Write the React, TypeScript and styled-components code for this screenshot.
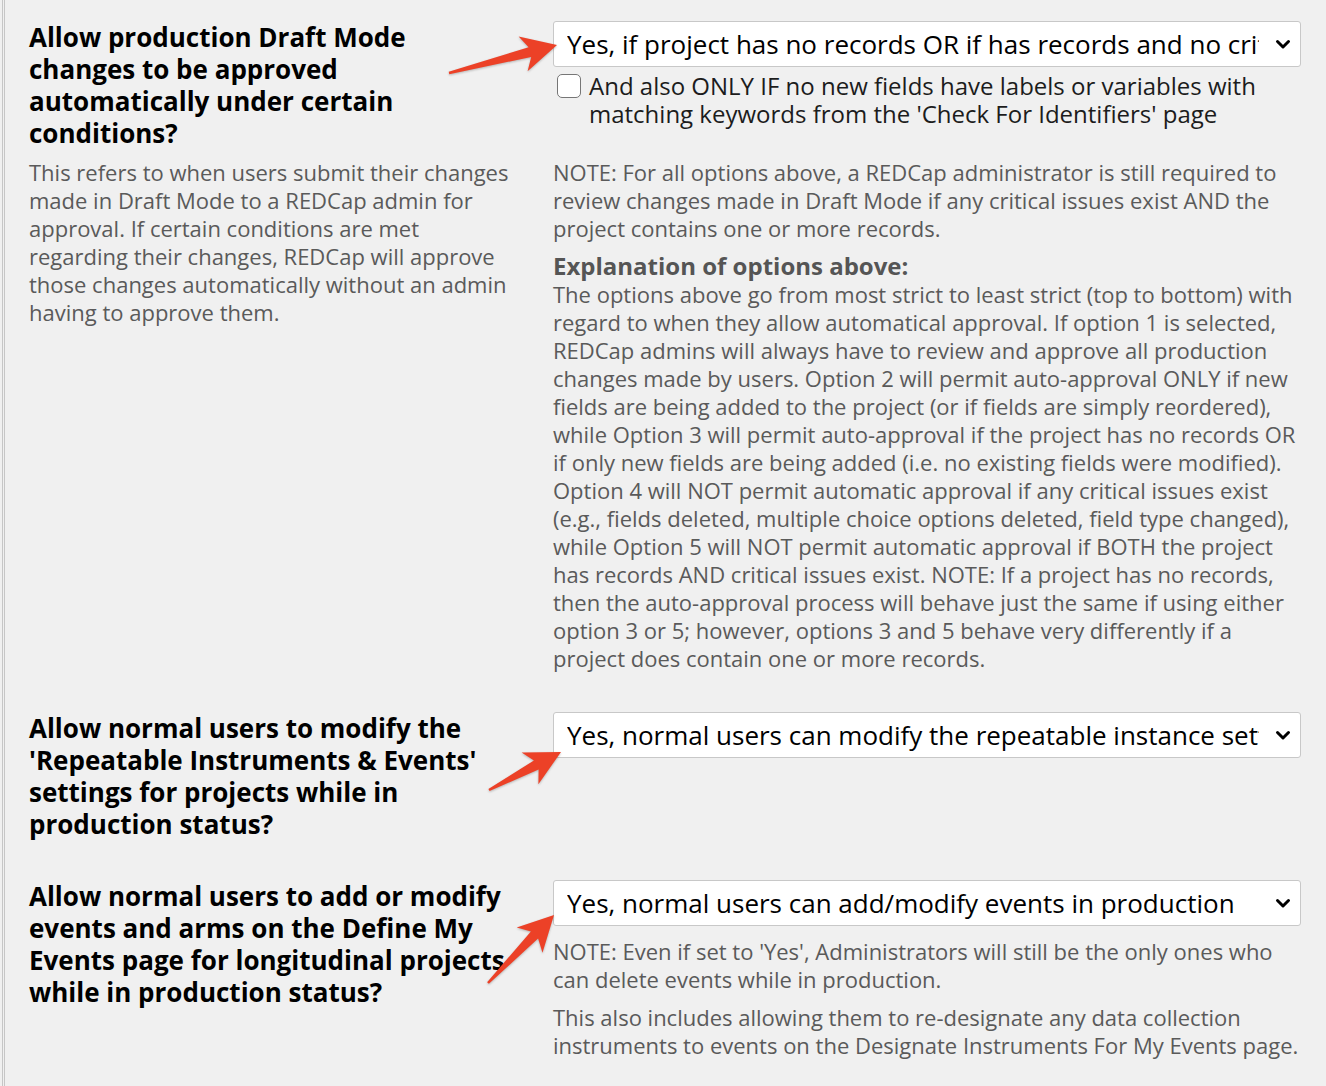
import React from "react";
import styled, { createGlobalStyle } from "styled-components";

const Global = createGlobalStyle`
  html, body { margin: 0; padding: 0; background: #f0f0f0; }
  body { font-family: "Open Sans", "Noto Sans", sans-serif; -webkit-font-smoothing: antialiased; }
`;

const Page = styled.div`
  position: relative;
  width: 1326px;
  height: 1086px;
  overflow: hidden;
  background: #f0f0f0;
  box-sizing: border-box;
  border-left: 3px double #c6c6c6;
  margin-left: 2px;
`;

const Table = styled.div`
  display: grid;
  grid-template-columns: 483px 748px;
  column-gap: 41px;
  padding-left: 24px;
`;

const Row = styled.div<{ $pt: number; $pb: number }>`
  display: contents;
  & > * {
    padding-top: ${(p) => p.$pt}px;
    padding-bottom: ${(p) => p.$pb}px;
  }
`;

const LeftCell = styled.div`
  display: flex;
  flex-direction: column;
  gap: 9px;
`;

const RightCell = styled.div`
  display: flex;
  flex-direction: column;
`;

const Heading = styled.div`
  font-weight: 700;
  font-size: 26px;
  line-height: 32px;
  color: #000;
`;

const Desc = styled.div`
  font-size: 22px;
  line-height: 28px;
  color: #5a5a5a;
`;

const SelectBox = styled.div`
  display: flex;
  align-items: center;
  height: 46px;
  box-sizing: border-box;
  background: #fff;
  border: 1px solid #c8c8c8;
  border-radius: 3px;
  padding: 0 9px 0 13px;
  gap: 16px;
`;

const SelectText = styled.span`
  flex: 1;
  overflow: hidden;
  white-space: nowrap;
  font-size: 26px;
  color: #000;
`;

const CheckRow = styled.label`
  display: flex;
  align-items: flex-start;
  gap: 8px;
  margin-top: 5px;
  padding-left: 4px;
  font-size: 24px;
  line-height: 28px;
  color: #1c1c1c;
`;

const CheckBox = styled.span`
  flex: none;
  width: 24px;
  height: 24px;
  box-sizing: border-box;
  margin-top: 2px;
  background: #fff;
  border: 1.5px solid #767676;
  border-radius: 5px;
`;

const Note = styled.div<{ $mt: number }>`
  margin-top: ${(p) => p.$mt}px;
  font-size: 22px;
  line-height: 28px;
  color: #5a5a5a;
`;

const NoteTitle = styled.div`
  margin-top: 10px;
  font-size: 24px;
  line-height: 28px;
  font-weight: 700;
  color: #555;
`;

const Overlay = styled.svg`
  position: absolute;
  top: 0;
  left: -5px;
  width: 1326px;
  height: 1086px;
  pointer-events: none;
  filter: drop-shadow(0 1px 1px rgba(0, 0, 0, 0.25));
`;

function Chevron() {
  return (
    <svg width="16" height="12" viewBox="0 0 16 12">
      <path d="M2.5 3.5 L8 9 L13.5 3.5" fill="none" stroke="#000" strokeWidth="3" strokeLinecap="round" strokeLinejoin="round" />
    </svg>
  );
}

function Select({ children }: { children: React.ReactNode }) {
  return (
    <SelectBox>
      <SelectText>{children}</SelectText>
      <Chevron />
    </SelectBox>
  );
}

function arrowPoints(tx: number, ty: number, px: number, py: number) {
  const dx = px - tx;
  const dy = py - ty;
  const len = Math.hypot(dx, dy);
  const ux = dx / len;
  const uy = dy / len;
  const nx = -uy;
  const ny = ux;
  const headLen = 35;
  const headHalf = 18;
  const notch = 7;
  const shaftHalf = 5;
  const tailHalf = 1.2;
  const bx = px - ux * headLen;
  const by = py - uy * headLen;
  const jx = bx + ux * notch;
  const jy = by + uy * notch;
  const pts: [number, number][] = [
    [tx + nx * tailHalf, ty + ny * tailHalf],
    [jx + nx * shaftHalf, jy + ny * shaftHalf],
    [bx + nx * headHalf, by + ny * headHalf],
    [px, py],
    [bx - nx * headHalf, by - ny * headHalf],
    [jx - nx * shaftHalf, jy - ny * shaftHalf],
    [tx - nx * tailHalf, ty - ny * tailHalf],
  ];
  return pts.map((p) => `${p[0].toFixed(1)},${p[1].toFixed(1)}`).join(" ");
}

const arrows = [
  { t: [449, 73], p: [557, 45] },
  { t: [489, 790], p: [561, 752] },
  { t: [488, 983], p: [554, 915] },
];

export default function App() {
  return (
    <>
      <Global />
      <Page>
        <Table>
          <Row $pt={21} $pb={20}>
            <LeftCell>
              <Heading>
                Allow production Draft Mode changes to be approved automatically under certain conditions?
              </Heading>
              <Desc>
                This refers to when users submit their changes made in Draft Mode to a REDCap admin for approval. If
                certain conditions are met regarding their changes, REDCap will approve those changes automatically
                without an admin having to approve them.
              </Desc>
            </LeftCell>
            <RightCell>
              <Select>Yes, if project has no records OR if has records and no critical issues exist</Select>
              <CheckRow>
                <CheckBox />
                <span>
                  And also ONLY IF no new fields have labels or variables with matching keywords from the 'Check For
                  Identifiers' page
                </span>
              </CheckRow>
              <Note $mt={30}>
                NOTE: For all options above, a REDCap administrator is still required to review changes made in Draft
                Mode if any critical issues exist AND the project contains one or more records.
              </Note>
              <NoteTitle>Explanation of options above:</NoteTitle>
              <Note $mt={0}>
                The options above go from most strict to least strict (top to bottom) with regard to when they allow
                automatical approval. If option 1 is selected, REDCap admins will always have to review and approve all
                production changes made by users. Option 2 will permit auto-approval ONLY if new fields are being added
                to the project (or if fields are simply reordered), while Option 3 will permit auto-approval if the
                project has no records OR if only new fields are being added (i.e. no existing fields were modified).
                Option 4 will NOT permit automatic approval if any critical issues exist (e.g., fields deleted, multiple
                choice options deleted, field type changed), while Option 5 will NOT permit automatic approval if BOTH
                the project has records AND critical issues exist. NOTE: If a project has no records, then the
                auto-approval process will behave just the same if using either option 3 or 5; however, options 3 and 5
                behave very differently if a project does contain one or more records.
              </Note>
            </RightCell>
          </Row>
          <Row $pt={20} $pb={20}>
            <LeftCell>
              <Heading>
                Allow normal users to modify the 'Repeatable Instruments &amp; Events' settings for projects while in
                production status?
              </Heading>
            </LeftCell>
            <RightCell>
              <Select>Yes, normal users can modify the repeatable instance settings in production</Select>
            </RightCell>
          </Row>
          <Row $pt={20} $pb={20}>
            <LeftCell>
              <Heading>
                Allow normal users to add or modify events and arms on the Define My Events page for longitudinal
                projects while in production status?
              </Heading>
            </LeftCell>
            <RightCell>
              <Select>Yes, normal users can add/modify events in production</Select>
              <Note $mt={11}>
                NOTE: Even if set to 'Yes', Administrators will still be the only ones who can delete events while in
                production.
              </Note>
              <Note $mt={10}>
                This also includes allowing them to re-designate any data collection instruments to events on the
                Designate Instruments For My Events page.
              </Note>
            </RightCell>
          </Row>
        </Table>
        <Overlay viewBox="0 0 1326 1086">
          {arrows.map((a, i) => (
            <polygon key={i} points={arrowPoints(a.t[0], a.t[1], a.p[0], a.p[1])} fill="#ec4127" />
          ))}
        </Overlay>
      </Page>
    </>
  );
}
